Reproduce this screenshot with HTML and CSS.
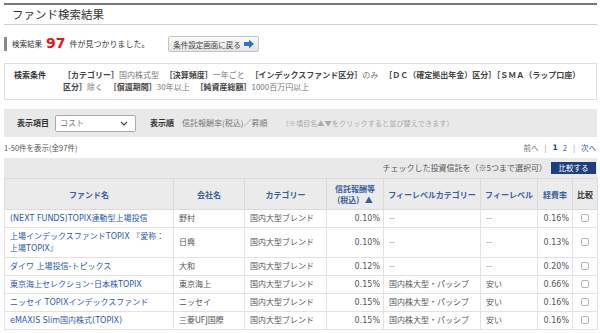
FILE: index.html
```html
<!DOCTYPE html>
<html lang="ja">
<head>
<meta charset="utf-8">
<title>ファンド検索結果</title>
<link rel="stylesheet" href="styles.css">
</head>
<body>
<div class="page">
  <h1 class="title">ファンド検索結果</h1>

  <div class="result">
    <div class="count"><span class="lbl">検索結果</span><span class="num">97</span><span class="msg">件が見つかりました。</span></div>
    <button class="back" type="button">条件設定画面に戻る<svg class="arrow" viewBox="0 0 10 10" width="10" height="10"><polygon points="0,3 5,3 5,0.5 10,5 5,9.5 5,7 0,7" fill="#2f73c4"/></svg></button>
  </div>

  <div class="cond">
    <div class="cond-h">検索条件</div>
    <div class="cond-body"><span class="k">［カテゴリー］</span><span class="v">国内株式型</span> <span class="k">［決算頻度］</span><span class="v">一年ごと</span> <span class="k">［インデックスファンド区分］</span><span class="v">のみ</span> <span class="k">［ＤＣ（確定拠出年金）区分］</span><span class="k">［ＳＭＡ（ラップ口座）</span><span class="k">区分］</span><span class="v">除く</span> <span class="k">［償還期間］</span><span class="v">30年以上</span> <span class="k">［純資産総額］</span><span class="v">1000百万円以上</span></div>
  </div>

  <div class="bar">
    <span class="bar-l">表示項目</span>
    <div class="select"><span>コスト</span><svg class="chev" viewBox="0 0 8 5" width="8" height="5"><polyline points="1,1 4,4 7,1" fill="none" stroke="#444" stroke-width="1.2"/></svg></div>
    <span class="bar-l order">表示順</span>
    <span class="bar-v">信託報酬率(税込)／昇順</span>
    <span class="note">（※項目名▲▼をクリックすると並び替えできます）</span>
  </div>

  <div class="pager-row">
    <span class="shown">1-50件を表示(全97件)</span>
    <span class="pager"><span class="pg-off">前へ</span><span class="sep">|</span><span class="cur">1</span><a class="pg">2</a><span class="sep">|</span><a class="pg">次へ</a></span>
  </div>

  <div class="tbl-wrap">
    <div class="tbl-top"><span class="chk-note">チェックした投資信託を（※5つまで選択可）</span><button class="cmp" type="button">比較する</button></div>
    <table class="funds">
      <colgroup>
        <col class="c1"><col class="c2"><col class="c3"><col class="c4"><col class="c5"><col class="c6"><col class="c7"><col class="c8">
      </colgroup>
      <thead>
        <tr>
          <th>ファンド名</th>
          <th>会社名</th>
          <th>カテゴリー</th>
          <th class="fee-h">信託報酬等<br>(税込)&nbsp;&nbsp;&nbsp;▲</th>
          <th>フィーレベルカテゴリー</th>
          <th>フィーレベル</th>
          <th>経費率</th>
          <th class="dark">比較</th>
        </tr>
      </thead>
      <tbody>
        <tr><td><a class="fn">(NEXT FUNDS)TOPIX連動型上場投信</a></td><td>野村</td><td>国内大型ブレンド</td><td class="r">0.10%</td><td class="dim">--</td><td class="dim">--</td><td class="r">0.16%</td><td class="c"><span class="cb"></span></td></tr>
        <tr><td><a class="fn">上場インデックスファンドTOPIX 『愛称：</a><a class="fn">上場TOPIX』</a></td><td>日興</td><td>国内大型ブレンド</td><td class="r">0.10%</td><td class="dim">--</td><td class="dim">--</td><td class="r">0.13%</td><td class="c"><span class="cb"></span></td></tr>
        <tr><td><a class="fn">ダイワ 上場投信-トピックス</a></td><td>大和</td><td>国内大型ブレンド</td><td class="r">0.12%</td><td class="dim">--</td><td class="dim">--</td><td class="r">0.20%</td><td class="c"><span class="cb"></span></td></tr>
        <tr><td><a class="fn">東京海上セレクション･日本株TOPIX</a></td><td>東京海上</td><td>国内大型ブレンド</td><td class="r">0.15%</td><td>国内株大型・パッシブ</td><td>安い</td><td class="r">0.66%</td><td class="c"><span class="cb"></span></td></tr>
        <tr><td><a class="fn">ニッセイ TOPIXインデックスファンド</a></td><td>ニッセイ</td><td>国内大型ブレンド</td><td class="r">0.15%</td><td>国内株大型・パッシブ</td><td>安い</td><td class="r">0.16%</td><td class="c"><span class="cb"></span></td></tr>
        <tr><td><a class="fn">eMAXIS Slim国内株式(TOPIX)</a></td><td>三菱UFJ国際</td><td>国内大型ブレンド</td><td class="r">0.15%</td><td>国内株大型・パッシブ</td><td>安い</td><td class="r">0.16%</td><td class="c"><span class="cb"></span></td></tr>
      </tbody>
    </table>
  </div>
</div>
</body>
</html>
```

FILE: styles.css
```css
* { box-sizing: border-box; }
html, body { margin: 0; padding: 0; background: #fff; }
body {
  font-family: "DejaVu Sans", "Noto Sans CJK JP", sans-serif;
  font-size: 8px;
  line-height: 12px;
  color: #555;
}
.page { width: 593px; margin-left: 4px; padding-top: 3px; }

.title {
  margin: 0;
  border-top: 2px solid #777;
  border-bottom: 1px solid #d0d0d0;
  height: 22px;
  padding-left: 8px;
  font-family: "Noto Sans CJK JP", sans-serif;
  font-size: 11.5px;
  font-weight: normal;
  line-height: 19px;
  color: #333;
}

.result {
  display: flex;
  align-items: center;
  margin-top: 11px;
  height: 16px;
}
.count {
  display: flex;
  align-items: center;
  border-left: 3px solid #8a8a8a;
  height: 14px;
  padding-left: 5px;
  width: 164px;
  font-family: "Noto Sans CJK JP", sans-serif;
  color: #333;
}
.count .lbl { font-size: 7.5px; }
.count .num {
  font-family: "DejaVu Sans", sans-serif;
  font-weight: bold;
  font-size: 14px;
  color: #e8141e;
  margin: 0 4px 0 4px;
  position: relative;
  top: -1px;
}
.count .msg { font-size: 8px; }
.back {
  display: flex;
  align-items: center;
  justify-content: center;
  gap: 3px;
  width: 91px;
  height: 16px;
  padding: 0;
  border: 1px solid #c4c4c4;
  border-radius: 2px;
  background: linear-gradient(#fbfbfb, #e4e4e4);
  font-family: "Noto Sans CJK JP", sans-serif;
  font-size: 7.5px;
  color: #444;
}
.back .arrow { display: block; }

.cond {
  display: flex;
  margin-top: 11px;
  border: 1px solid #dcdcdc;
  padding: 5px 8px 6px 9px;
  height: 37px;
  font-family: "Noto Sans CJK JP", sans-serif;
}
.cond-h { width: 49px; flex: none; font-weight: bold; color: #333; }
.cond-body { flex: 1; color: #777; word-spacing: 4px; }
.cond-body .k { font-weight: bold; color: #444; }

.bar {
  display: flex;
  align-items: center;
  margin-top: 9px;
  height: 28px;
  background: #e9e9e9;
  padding-left: 13px;
  font-family: "Noto Sans CJK JP", sans-serif;
}
.bar-l { font-weight: bold; color: #333; }
.select {
  display: flex;
  align-items: center;
  justify-content: space-between;
  margin-left: 6px;
  width: 81px;
  height: 17px;
  background: #fff;
  border: 1px solid #a9a9a9;
  border-radius: 2px;
  padding: 0 7px 0 4px;
  color: #777;
}
.chev { display: block; }
.order { margin-left: 14px; }
.bar-v { margin-left: 8px; color: #777; }
.note { margin-left: 14px; color: #aaa; font-size: 7.2px; }

.pager-row {
  display: flex;
  justify-content: space-between;
  align-items: center;
  height: 21px;
  font-family: "Noto Sans CJK JP", sans-serif;
  font-size: 7.5px;
}
.shown { color: #555; }
.pager { display: flex; align-items: center; gap: 5px; padding-right: 1px; }
.pg-off { color: #777; }
.sep { color: #888; margin: 0 1px; }
.cur { color: #1d3d7c; font-weight: bold; font-family: "DejaVu Sans", sans-serif; }
.pg { color: #2e5ca8; }

.tbl-wrap { background: #e9e9e9; }
.tbl-top {
  display: flex;
  justify-content: flex-end;
  align-items: center;
  height: 20px;
  padding-right: 1px;
  font-family: "Noto Sans CJK JP", sans-serif;
}
.chk-note { color: #555; margin-right: 4px; }
.cmp {
  width: 45px;
  height: 12px;
  padding: 0;
  border: none;
  background: #1d3f7e;
  color: #fff;
  font-family: "Noto Sans CJK JP", sans-serif;
  font-size: 7.5px;
  line-height: 12px;
}

.funds {
  width: 593px;
  table-layout: fixed;
  border-collapse: collapse;
}
.c1 { width: 169px; } .c2 { width: 71px; } .c3 { width: 82px; } .c4 { width: 57px; }
.c5 { width: 97px; } .c6 { width: 57px; } .c7 { width: 35px; } .c8 { width: 25px; }
.funds th {
  height: 31px;
  background: #ebebeb;
  border: 1px solid #dadada;
  font-family: "Noto Sans CJK JP", sans-serif;
  font-weight: bold;
  color: #3a5e9e;
  text-align: center;
  line-height: 11px;
  padding: 0;
}
.funds th.dark { color: #333; }
.funds td {
  background: #fff;
  border: 1px solid #e2e2e2;
  padding: 3px 5px 2px 5px;
  font-family: "DejaVu Sans", "Noto Sans CJK JP", sans-serif;
  color: #555;
  vertical-align: middle;
}
.funds td.r { text-align: right; padding-right: 3px; }
.funds td.c { text-align: center; padding: 0; }
.funds td.dim { color: #999; }
.fn { color: #2e5ca8; }
.cb {
  display: inline-block;
  width: 8px;
  height: 8px;
  border: 1px solid #b4b4b4;
  border-radius: 2px;
  background: #fff;
  vertical-align: middle;
}
```
